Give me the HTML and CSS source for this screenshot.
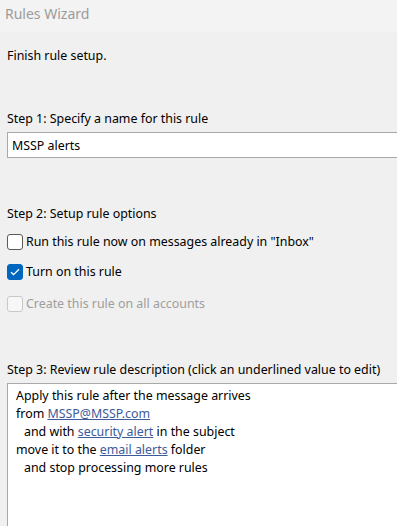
FILE: index.html
```html
<!DOCTYPE html>
<html lang="en">
<head>
  <meta charset="UTF-8">
  <title>Rules Wizard</title>
  <link rel="stylesheet" href="styles.css">
</head>
<body>
  <header class="title-bar">Rules Wizard</header>

  <div class="wizard">
    <p class="intro">Finish rule setup.</p>

    <!-- Step 1 -->
    <div class="step step-name">
      <label class="step-label" for="ruleName">Step 1: Specify a name for this rule</label>
      <input type="text" id="ruleName" class="name-input" value="MSSP alerts">
    </div>

    <!-- Step 2 -->
    <div class="step step-options">
      <div class="step-label">Step 2: Setup rule options</div>
      <label class="check-row">
        <span class="box"></span>
        Run this rule now on messages already in "Inbox"
      </label>
      <label class="check-row">
        <span class="box checked">
          <svg width="10" height="8" viewBox="0 0 10 8"><path d="M1 4.2 L3.6 6.6 L9 1.2" fill="none" stroke="#fff" stroke-width="1.3"/></svg>
        </span>
        Turn on this rule
      </label>
      <label class="check-row disabled">
        <span class="box"></span>
        Create this rule on all accounts
      </label>
    </div>

    <!-- Step 3 -->
    <div class="step step-desc">
      <div class="step-label">Step 3: Review rule description (click an underlined value to edit)</div>
      <div class="desc-box">
        <div>Apply this rule after the message arrives</div>
        <div>from <a href="#">MSSP@MSSP.com</a></div>
        <div class="indent">and with <a href="#">security alert</a> in the subject</div>
        <div>move it to the <a href="#">email alerts</a> folder</div>
        <div class="indent">and stop processing more rules</div>
      </div>
    </div>
  </div>
</body>
</html>
```

FILE: styles.css
```css
body {
  margin: 0;
  padding: 0;
  background-color: #f0f0f0;
  font-family: 'Noto Sans', sans-serif;
  font-size: 12.4px;
  color: #000;
  overflow: hidden;
}

.title-bar {
  height: 32px;
  background-color: #f3f3f3;
  color: #9b9b9b;
  font-size: 14px;
  line-height: 27px;
  padding-left: 5px;
}

.wizard {
  padding-left: 7px;
}

.intro {
  margin: 16px 0 0;
  line-height: 16px;
}

.step-label {
  display: block;
  line-height: 16px;
}

.step-name {
  margin-top: 47px;
}

.name-input {
  display: block;
  box-sizing: border-box;
  width: 400px;
  height: 26px;
  margin-top: 5px;
  padding: 0 4px;
  border: 1px solid #a9a9a9;
  border-right: none;
  font-family: inherit;
  font-size: 12.4px;
  outline: none;
}

.step-options {
  margin-top: 48px;
}

.check-row {
  display: flex;
  align-items: center;
  gap: 3px;
  height: 16px;
  margin-top: 12px;
  line-height: 16px;
}

.check-row + .check-row {
  margin-top: 14px;
}

.check-row.disabled {
  margin-top: 16px;
  color: #9e9e9e;
}

.box {
  box-sizing: border-box;
  width: 16px;
  height: 16px;
  border: 1px solid #5a5a5a;
  border-radius: 3px;
  background-color: #fff;
  display: flex;
  align-items: center;
  justify-content: center;
}

.box.checked {
  background-color: #0067c0;
  border-color: #0067c0;
}

.check-row.disabled .box {
  border-color: #c8c8c8;
  background-color: #f7f7f7;
}

.step-desc {
  margin-top: 50px;
}

.desc-box {
  box-sizing: border-box;
  width: 400px;
  height: 150px;
  margin-top: 5px;
  padding: 3px 8px;
  background-color: #fff;
  border: 1px solid #a9a9a9;
  border-right: none;
  border-bottom: none;
  line-height: 18px;
}

.desc-box a {
  color: #3d5a99;
}

.indent {
  padding-left: 8px;
}
```
